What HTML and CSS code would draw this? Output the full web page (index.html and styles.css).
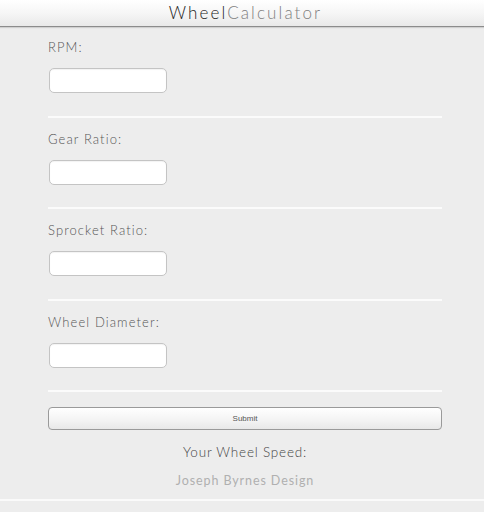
FILE: index.html
```html
<!DOCTYPE html>
<html>
<head>
<meta charset="utf-8">
<title>WheelCalculator</title>
<link rel="stylesheet" href="styles.css">
</head>
<body>
<header class="topbar">
  <h1 class="brand"><span class="brand-dark">Wheel</span><span class="brand-light">Calculator</span></h1>
</header>
<main class="content">
  <form class="calc">
    <div class="field field-first">
      <label class="field-label" for="rpm">RPM:</label>
      <input class="field-input" id="rpm" type="text">
    </div>
    <div class="field">
      <label class="field-label" for="gear">Gear Ratio:</label>
      <input class="field-input" id="gear" type="text">
    </div>
    <div class="field">
      <label class="field-label" for="sprocket">Sprocket Ratio:</label>
      <input class="field-input" id="sprocket" type="text">
    </div>
    <div class="field">
      <label class="field-label" for="diameter">Wheel Diameter:</label>
      <input class="field-input" id="diameter" type="text">
    </div>
    <button class="submit" type="button">Submit</button>
  </form>
  <p class="result">Your Wheel Speed:</p>
  <p class="credit">Joseph Byrnes Design</p>
</main>
<div class="bottom-rule"></div>
</body>
</html>
```
FILE: styles.css
```css
html, body {
  margin: 0;
  padding: 0;
  background: #ededed;
}
body {
  font-family: Lato, "Noto Sans", sans-serif;
  font-weight: 300;
  color: #555;
}
.topbar {
  height: 26px;
  background: linear-gradient(#ffffff 0%, #f6f6f6 50%, #e9e9e9 100%);
  border-bottom: 1px solid #8c8c8c;
  box-shadow: 0 1px 1px rgba(0,0,0,0.12);
  display: flex;
  align-items: center;
  justify-content: center;
}
.brand {
  margin: 0;
  padding-left: 7px;
  font-size: 17px;
  font-weight: 300;
  letter-spacing: 2.1px;
  line-height: 26px;
}
.brand-dark { color: #222; }
.brand-light { color: #808080; }
.content {
  width: 394px;
  margin: 0 auto;
  padding: 0 0 0 6px;
  box-sizing: content-box;
}
.calc {
  display: flex;
  flex-direction: column;
}
.field {
  display: flex;
  flex-direction: column;
  align-items: flex-start;
  padding: 13px 0 22.5px;
  border-bottom: 2px solid #fbfbfb;
}
.field-first {
  padding-top: 12px;
}
.field-label {
  font-size: 13px;
  line-height: 16px;
  letter-spacing: 1.1px;
  color: #555;
  margin-bottom: 13px;
}
.field-input {
  width: 118px;
  height: 25px;
  box-sizing: border-box;
  margin: 0 0 0 1px;
  border: 1px solid #c4c4c4;
  border-radius: 5px;
  background: #fff;
  box-shadow: inset 0 1px 1px rgba(0,0,0,0.05);
  padding: 0 6px;
}
.submit {
  margin-top: 15px;
  height: 23px;
  width: 100%;
  border: 1px solid #9a9a9a;
  border-radius: 4px;
  background: linear-gradient(#ffffff 0%, #f3f3f3 60%, #e8e8e8 100%);
  font-family: "Liberation Sans", Arial, sans-serif;
  font-size: 8px;
  color: #555;
  padding: 0;
}
.result {
  margin: 14px 0 0;
  text-align: center;
  font-size: 13.5px;
  line-height: 16px;
  letter-spacing: 0.8px;
  color: #444;
}
.credit {
  margin: 13px 0 0;
  text-align: center;
  font-size: 12.5px;
  font-weight: 400;
  line-height: 16px;
  letter-spacing: 0.9px;
  color: #b0b0b0;
}
.bottom-rule {
  margin-top: 10px;
  height: 2px;
  background: #fafafa;
}
```
